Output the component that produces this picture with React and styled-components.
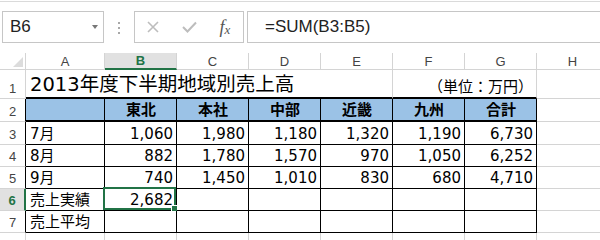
import React from "react"
import styled, { createGlobalStyle } from "styled-components"

// colours
const GRID = "#d4d4d4"
const INK = "#000"
const GREEN = "#217346"
const HEAD_BLUE = "#9bc2e6"

const GlobalStyle = createGlobalStyle`
  html, body {
    margin: 0;
    padding: 0;
    background: #fff;
  }
  body {
    font-family: "DejaVu Sans", "Noto Sans CJK JP", sans-serif;
  }
`

const Window = styled.div`
  width: 600px;
  height: 240px;
  overflow: hidden;
  background: #fff;
`

// formula bar
const Toolbar = styled.div`
  display: flex;
  align-items: flex-start;
  margin-top: 1px;
  padding: 9px 0 0 2px;
  box-sizing: border-box;
  border-top: 1px solid #dadada;
  height: 52px;
`
const NameBox = styled.div`
  display: flex;
  align-items: center;
  justify-content: space-between;
  width: 102px;
  height: 32px;
  box-sizing: border-box;
  border: 1px solid #c6c6c6;
  padding: 0 5px 0 7px;
  font-family: "Liberation Sans", sans-serif;
  font-size: 17px;
  color: #222;
`
const Caret = styled.span`
  width: 0;
  height: 0;
  border-left: 3.5px solid transparent;
  border-right: 3.5px solid transparent;
  border-top: 4px solid #777;
`
const Grip = styled.div`
  display: flex;
  flex-direction: column;
  align-items: center;
  gap: 3px;
  width: 30px;
  padding-top: 11px;
  span {
    width: 2px;
    height: 2px;
    background: #a8a8a8;
  }
`
const FxGroup = styled.div`
  display: flex;
  width: 110px;
  height: 32px;
  box-sizing: border-box;
  border: 1px solid #c6c6c6;
`
const FxSlot = styled.div`
  flex: 1;
  display: flex;
  align-items: center;
  justify-content: center;
`
const FxLabel = styled.span`
  font-family: "Liberation Serif", serif;
  font-style: italic;
  font-size: 18px;
  color: #555;
  sub {
    font-size: 13px;
    vertical-align: -1px;
  }
`
const FormulaBox = styled.div`
  flex: 1;
  height: 32px;
  margin-left: 3px;
  box-sizing: border-box;
  border: 1px solid #c6c6c6;
  border-right: none;
  display: flex;
  align-items: center;
  padding-left: 17px;
  font-family: "Liberation Sans", sans-serif;
  font-size: 17px;
  color: #222;
`

// sheet
const Sheet = styled.div`
  display: grid;
  grid-template-columns: 26px 79px repeat(7, 72px);
  grid-template-rows: 17px 29px 23px 23px 22px 22px 22px 22px 22px;
  width: 609px;
`
const Corner = styled.div`
  display: flex;
  align-items: flex-end;
  justify-content: flex-end;
  padding: 0 2px 2px 0;
  box-sizing: border-box;
  border-right: 1px solid ${GRID};
  border-bottom: 1px solid ${GRID};
  &::after {
    content: "";
    width: 0;
    height: 0;
    border-left: 10px solid transparent;
    border-bottom: 10px solid #dcdcdc;
  }
`
const ColHead = styled.div`
  display: flex;
  align-items: center;
  justify-content: center;
  box-sizing: border-box;
  border-right: 1px solid ${GRID};
  border-bottom: ${p => (p.$active ? `2px solid ${GREEN}` : `1px solid ${GRID}`)};
  background: ${p => (p.$active ? "#e1e1e1" : "#fff")};
  color: ${p => (p.$active ? GREEN : "#444")};
  font-weight: ${p => (p.$active ? "bold" : "normal")};
  font-family: "Liberation Sans", sans-serif;
  font-size: 13px;
`
const RowHead = styled.div`
  display: flex;
  align-items: flex-end;
  justify-content: center;
  padding-bottom: 2px;
  box-sizing: border-box;
  border-right: ${p => (p.$active ? `2px solid ${GREEN}` : `1px solid ${p.$edge || GRID}`)};
  border-bottom: 1px solid ${GRID};
  background: ${p => (p.$active ? "#e1e1e1" : "#fff")};
  color: ${p => (p.$active ? GREEN : "#444")};
  font-weight: ${p => (p.$active ? "bold" : "normal")};
  font-family: "Liberation Sans", sans-serif;
  font-size: 13px;
`
const Cell = styled.div`
  position: relative;
  display: flex;
  align-items: flex-end;
  justify-content: ${p =>
    p.$align === "right" ? "flex-end" : p.$align === "center" ? "center" : "flex-start"};
  grid-column: span ${p => p.$span || 1};
  padding: 0 3px 1px 4px;
  box-sizing: border-box;
  border-right: 1px solid ${p => p.$r || GRID};
  border-bottom: ${p => p.$bw || 1}px solid ${p => p.$b || GRID};
  background: ${p => p.$bg || "#fff"};
  font-size: ${p => p.$size || 15}px;
  font-weight: ${p => (p.$bold ? "bold" : "normal")};
  color: #000;
  white-space: nowrap;
  line-height: 1.2;
`
const Selection = styled.div`
  position: absolute;
  top: -2px;
  left: -2px;
  right: 0;
  bottom: 0;
  border: 2px solid ${GREEN};
  pointer-events: none;
`
const Handle = styled.span`
  position: absolute;
  right: -4px;
  bottom: -4px;
  width: 5px;
  height: 5px;
  background: ${GREEN};
  border: 1px solid #fff;
`

const COLS = ["A", "B", "C", "D", "E", "F", "G", "H"]
const REGIONS = ["東北", "本社", "中部", "近畿", "九州", "合計"]
const ROWS = [
  ["7月", "1,060", "1,980", "1,180", "1,320", "1,190", "6,730"],
  ["8月", "882", "1,780", "1,570", "970", "1,050", "6,252"],
  ["9月", "740", "1,450", "1,010", "830", "680", "4,710"],
  ["売上実績", "2,682", "", "", "", "", ""],
  ["売上平均", "", "", "", "", "", ""],
]

const Cross = () => (
  <svg width="12" height="12" viewBox="0 0 12 12">
    <path d="M1 1 L11 11 M11 1 L1 11" stroke="#bdbdbd" strokeWidth="1.6" fill="none" />
  </svg>
)
const Check = () => (
  <svg width="15" height="12" viewBox="0 0 15 12">
    <path d="M1 6 L5.5 10.5 L14 1.5" stroke="#bdbdbd" strokeWidth="2" fill="none" />
  </svg>
)

export default function App() {
  return (
    <Window>
      <GlobalStyle />
      <Toolbar>
        <NameBox>
          B6
          <Caret />
        </NameBox>
        <Grip>
          <span />
          <span />
          <span />
        </Grip>
        <FxGroup>
          <FxSlot>
            <Cross />
          </FxSlot>
          <FxSlot>
            <Check />
          </FxSlot>
          <FxSlot>
            <FxLabel>
              f<sub>x</sub>
            </FxLabel>
          </FxSlot>
        </FxGroup>
        <FormulaBox>=SUM(B3:B5)</FormulaBox>
      </Toolbar>

      <Sheet>
        <Corner />
        {COLS.map(c => (
          <ColHead key={c} $active={c === "B"}>
            {c}
          </ColHead>
        ))}

        {/* row 1: title */}
        <RowHead>1</RowHead>
        <Cell $span={5} $b={INK} $bw={2} $size={19.5}>
          2013年度下半期地域別売上高
        </Cell>
        <Cell $span={2} $b={INK} $bw={2} $align="right" $size={15}>
          （単位：万円）
        </Cell>
        <Cell />

        {/* row 2: header */}
        <RowHead $edge={INK}>2</RowHead>
        <Cell $bg={HEAD_BLUE} $r={INK} $b={INK} $bw={2} />
        {REGIONS.map(r => (
          <Cell key={r} $bg={HEAD_BLUE} $r={INK} $b={INK} $bw={2} $align="center" $bold>
            {r}
          </Cell>
        ))}
        <Cell />

        {/* rows 3-7 */}
        {ROWS.map((row, i) => (
          <React.Fragment key={i}>
            <RowHead $edge={INK} $active={i === 3}>
              {i + 3}
            </RowHead>
            {row.map((v, j) => (
              <Cell key={j} $r={INK} $b={INK} $align={j === 0 ? "left" : "right"}>
                {v}
                {i === 3 && j === 1 && (
                  <Selection>
                    <Handle />
                  </Selection>
                )}
              </Cell>
            ))}
            <Cell />
          </React.Fragment>
        ))}

        {/* row 8, only its top edge shows */}
        <RowHead />
        {COLS.map(c => (
          <Cell key={c} />
        ))}
      </Sheet>
    </Window>
  )
}
